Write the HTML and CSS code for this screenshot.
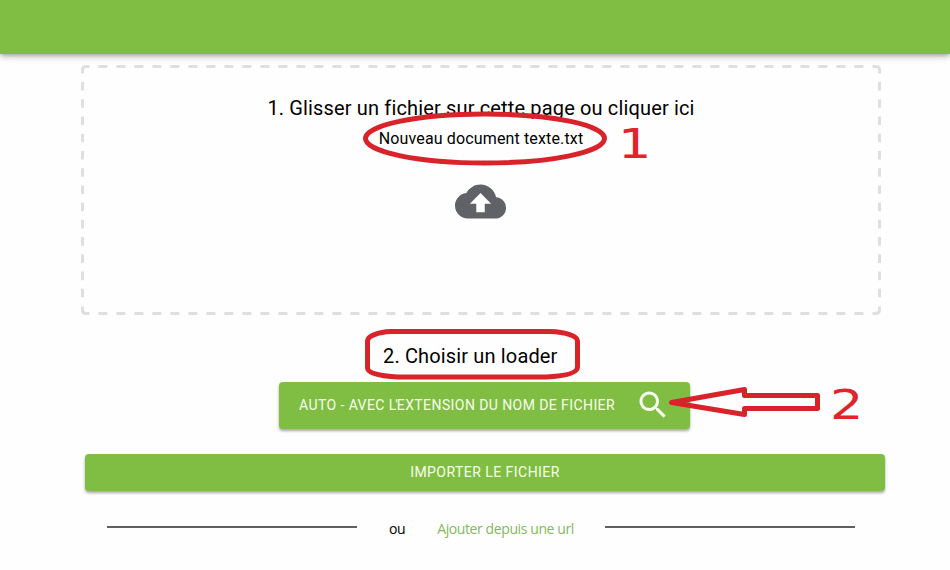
FILE: index.html
```html
<!DOCTYPE html>
<html lang="fr">
<head>
<meta charset="utf-8">
<title>Importer un fichier</title>
<link rel="stylesheet" href="styles.css">
</head>
<body>
<header class="topbar"></header>
<main class="page">
  <section class="dropzone">
    <svg class="dropzone-border" viewBox="0 0 800 250" fill="none">
      <path class="dash-h" d="M17.4 1.5H783M17.4 248.5H783"/>
      <path class="dash-v" d="M1.5 17V233M798.5 17V233"/>
      <path d="M8.5 1.5H5Q1.5 1.5 1.5 5V8.5M791.5 1.5H795Q798.5 1.5 798.5 5V8.5M8.5 248.5H5Q1.5 248.5 1.5 245V241.5M791.5 248.5H795Q798.5 248.5 798.5 245V241.5"/>
    </svg>
    <h2 class="step-title">1. Glisser un fichier sur cette page ou cliquer ici</h2>
    <p class="filename">Nouveau document texte.txt</p>
    <svg class="cloud" viewBox="0 0 24 24"><path d="M19.35 10.04C18.67 6.59 15.64 4 12 4 9.11 4 6.6 5.64 5.35 8.04 2.34 8.36 0 10.91 0 14c0 3.31 2.69 6 6 6h13c2.76 0 5-2.24 5-5 0-2.64-2.05-4.78-4.65-4.96zM14 13v4h-4v-4H7l5-5 5 5h-3z"/></svg>
  </section>
  <h2 class="loader-title">2. Choisir un loader</h2>
  <button class="btn btn-loader">
    <span>AUTO - AVEC <span class="tight">L'</span>EXTENSION DU NOM DE FICHIER</span>
    <svg class="search" viewBox="0 0 24 24"><path d="M15.5 14h-.79l-.28-.27C15.41 12.59 16 11.11 16 9.5 16 5.91 13.09 3 9.5 3S3 5.91 3 9.5 5.91 16 9.5 16c1.61 0 3.09-.59 4.23-1.57l.27.28v.79l5 4.99L20.49 19l-4.99-5zm-6 0C7.01 14 5 11.99 5 9.5S7.01 5 9.5 5 14 7.01 14 9.5 11.99 14 9.5 14z"/></svg>
  </button>
  <button class="btn btn-import">IMPORTER LE FICHIER</button>
  <div class="alt">
    <span class="rule"></span>
    <span class="or">ou</span>
    <a class="url">Ajouter depuis une url</a>
    <span class="rule"></span>
  </div>
</main>
<svg class="marks" viewBox="0 0 950 570" fill="none">
  <ellipse cx="485" cy="138.500" rx="119.500" ry="24.500"/>
  <path d="M391 331.500H550C566 332 577.500 336 577.500 341V367C577.500 373 566 376 546 377H398C378 376 367.500 373 367.500 368V341C367.500 336 378 332 391 331.500Z"/>
  <path d="M671.500 402.500L744.500 389.500V395.500H817.500V408.500H744.500V414.500Z"/>
</svg>
<span class="num num-one">1</span>
<span class="num num-two">2</span>
</body>
</html>
```
FILE: styles.css
```css
* { box-sizing: border-box; }
body {
  margin: 0;
  width: 950px;
  height: 570px;
  overflow: hidden;
  position: relative;
  background: #fefefe;
  color: #000;
  font-family: Roboto, "Liberation Sans", sans-serif;
}
.topbar {
  height: 54px;
  background: #7fbe42;
  box-shadow: 0 2px 4px -1px rgba(40, 20, 40, .3), 0 4px 6px rgba(40, 20, 40, .12), 0 1px 9px rgba(40, 20, 40, .08);
}
.page {
  display: flex;
  flex-direction: column;
  padding-top: 11px;
}
.dropzone {
  position: relative;
  width: 800px;
  height: 250px;
  margin-left: 81px;
  padding-top: 31px;
  display: flex;
  flex-direction: column;
  align-items: center;
}
.dropzone-border {
  position: absolute;
  inset: 0;
  stroke: #dfdfdf;
  stroke-width: 3;
}
.dash-h { stroke-dasharray: 9 9; }
.dash-v { stroke-dasharray: 8.6 8.63; }
.step-title, .loader-title {
  margin: 0;
  font-size: 20px;
  font-weight: 400;
  line-height: 24px;
  letter-spacing: .15px;
  white-space: nowrap;
}
.filename {
  margin: 9px 0 0;
  font-size: 16px;
  line-height: 20px;
  letter-spacing: .14px;
  white-space: nowrap;
}
.cloud {
  width: 51px;
  height: 51px;
  margin: 27px 2px 0 0;
  fill: #606268;
}
.loader-title { margin: 29px 0 0 383px; }
.btn {
  display: flex;
  align-items: center;
  border: 0;
  border-radius: 4px;
  background: #7fbe42;
  color: #f7fdec;
  font-family: inherit;
  font-size: 14px;
  font-weight: 400;
  white-space: nowrap;
  box-shadow: 0 2px 3px rgba(0, 0, 0, .35);
}
.btn-loader {
  width: 411px;
  height: 47px;
  margin: 14px 0 0 279px;
  padding: 0 19px 1px 20px;
  justify-content: space-between;
  letter-spacing: .42px;
}
.tight { letter-spacing: -1px; }
.search { width: 36px; height: 36px; fill: #f7fdec; }
.btn-import {
  width: 800px;
  height: 37px;
  margin: 25px 0 0 85px;
  padding-bottom: 2px;
  justify-content: center;
  letter-spacing: .46px;
}
.alt {
  display: flex;
  align-items: center;
  width: 748px;
  height: 20px;
  margin: 27px 0 0 107px;
  font-family: "Open Sans", "Noto Sans", sans-serif;
  font-size: 14px;
  letter-spacing: -.4px;
}
.rule { flex: 0 0 250px; height: 2px; margin-top: -3px; background: #606060; }
.or { margin-left: 32px; }
.url { margin: 0 auto 0 32px; color: #83b95c; white-space: nowrap; }
.marks {
  position: absolute;
  inset: 0;
  width: 950px;
  height: 570px;
  stroke: #d9232b;
  stroke-width: 5;
  stroke-linejoin: round;
  pointer-events: none;
}
.num {
  position: absolute;
  font-family: "DejaVu Sans", sans-serif;
  font-size: 41px;
  line-height: 48px;
  color: #e0242b;
  transform: scaleX(1.28);
  transform-origin: left;
}
.num-one { left: 618px; top: 120px; }
.num-two { left: 830px; top: 381px; }
```
